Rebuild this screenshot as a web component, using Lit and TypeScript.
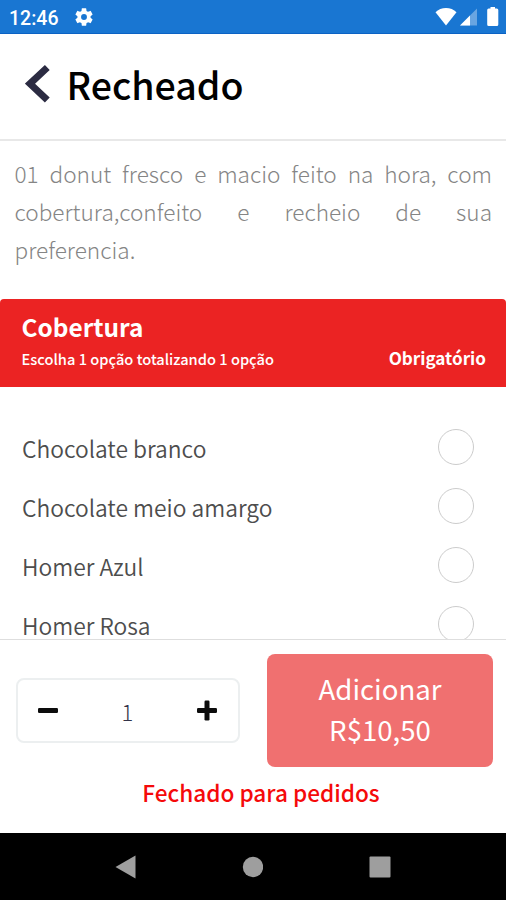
import { LitElement, html, css, svg } from "lit";
import { customElement, property, state } from "lit/decorators.js";

@customElement("status-bar")
class StatusBar extends LitElement {
  static styles = css`
    :host { display: flex; align-items: center; height: 34px; flex: none; box-sizing: border-box;
      background: #1976d2; border-bottom: 1px solid #0b62c4; color: #fff; padding: 1px 7px 0 9px;
      font: 500 19.5px/32px Roboto, "Liberation Sans", sans-serif; }
    .time { padding-top: 3px; }
    svg { display: block; fill: #fff; }
    .gear { margin-left: 15px; }
    .space { flex: 1; }
    .wifi { margin-right: 2px; }
    .signal { margin-right: 9px; }
  `;
  render() {
    return html`
      <span class="time">12:46</span>
      <svg class="gear" width="22" height="22" viewBox="0 0 24 24"><path d="M19.140 12.940c.04-.3.06-.61.06-.94 0-.32-.02-.64-.07-.94l2.030-1.580a.49.49 0 0 0 .12-.61l-1.920-3.320a.49.49 0 0 0-.59-.22l-2.390.96c-.5-.38-1.030-.7-1.620-.94l-.36-2.540a.48.48 0 0 0-.48-.41h-3.840c-.24 0-.43.17-.47.41l-.36 2.540c-.59.24-1.130.57-1.620.94l-2.390-.96c-.22-.08-.47 0-.59.22L2.740 8.870c-.12.21-.08.47.12.61l2.030 1.580c-.05.3-.09.63-.09.94s.02.64.07.94l-2.030 1.580a.49.49 0 0 0-.12.61l1.920 3.320c.12.22.37.29.59.22l2.390-.96c.5.38 1.030.7 1.620.94l.36 2.540c.05.24.24.41.48.41h3.840c.24 0 .44-.17.47-.41l.36-2.540c.59-.24 1.130-.56 1.620-.94l2.390.96c.22.08.47 0 .59-.22l1.920-3.320c.12-.22.07-.47-.12-.61zM12 15.200a3.200 3.200 0 1 1 0-6.400 3.200 3.200 0 0 1 0 6.400z"/></svg>
      <span class="space"></span>
      <svg class="wifi" width="23" height="20" viewBox="0 0 23 20"><path d="M.5 5.200C3.200 2.600 7 1 11 1s7.800 1.600 10.500 4.200L11 18.400z"/></svg>
      <svg class="signal" width="18" height="18" viewBox="0 0 18 18"><path d="M17 .5v17H0z" opacity=".35"/><path d="M10 7.500v10H0z"/></svg>
      <svg width="12" height="20" viewBox="0 0 12 20"><path d="M3.500 0h4.500v1.500h1.800q1.500 0 1.500 1.500v14.500q0 1.500-1.500 1.500H1.700Q.2 19 .2 17.500V3q0-1.500 1.500-1.500h1.800z"/></svg>
    `;
  }
}

@customElement("option-row")
class OptionRow extends LitElement {
  @property() label = "";
  static styles = css`
    :host { display: flex; align-items: center; justify-content: space-between; height: 59px; flex: none; padding: 0 32.500px 0 22px; }
    .label { color: #4d4d4d; font-size: 22.800px; line-height: 34px; font-weight: 350; padding-top: 4px; }
    .radio { width: 36px; height: 36px; box-sizing: border-box; border: 1.500px solid #cccccc; border-radius: 50%; }
  `;
  render() {
    return html`<span class="label">${this.label}</span><span class="radio"></span>`;
  }
}

@customElement("app-root")
class AppRoot extends LitElement {
  @state() private options = ["Chocolate branco", "Chocolate meio amargo", "Homer Azul", "Homer Rosa"];

  static styles = css`
    :host { display: flex; flex-direction: column; height: 900px; overflow: hidden; background: #fff;
      font-family: "Noto Sans CJK JP", "Noto Sans CJK SC", sans-serif; }
    svg { display: block; }
    .header { height: 107px; flex: none; box-sizing: border-box; border-bottom: 2px solid #e8e8e8;
      display: flex; align-items: center; padding: 0 25px 5px; gap: 15.500px; }
    .title { margin: 0; font-size: 37.500px; line-height: 50px; font-weight: 500; color: #000; }
    .description { margin: 0; flex: none; height: 158px; box-sizing: border-box; padding: 14px 14px 0 14.500px;
      font-size: 22.600px; line-height: 38px; font-weight: 300; color: #858585; text-align: justify; }
    .group { height: 88px; flex: none; box-sizing: border-box; background: #eb2323; color: #fff;
      border-radius: 4px 4px 0 0; padding: 8px 20px 0 21.500px; }
    .group-name { font-size: 24.400px; line-height: 39px; font-weight: 700; }
    .group-info { display: flex; justify-content: space-between; align-items: baseline; line-height: 24px; }
    .hint { font-size: 14.650px; font-weight: 500; }
    .required { font-size: 17.100px; font-weight: 700; }
    .options { flex: none; height: 252px; box-sizing: border-box; overflow: hidden; padding-top: 30px; display: flex; flex-direction: column; }
    .footer { flex: none; height: 194px; box-sizing: border-box; border-top: 1.500px solid #dedede; padding: 14px 13px 0 16px; }
    .actions { display: flex; justify-content: space-between; align-items: center; }
    .stepper { width: 224px; height: 65px; box-sizing: border-box; border: 2px solid #eceff0; border-radius: 8px;
      display: flex; align-items: center; justify-content: space-between; padding: 0 21px 0 20px; }
    .count { font-size: 22px; line-height: 32px; font-weight: 300; color: #333348; }
    .add { width: 226px; height: 113px; border-radius: 8px; background: #f07070; color: #fff; box-sizing: border-box; padding-bottom: 4px;
      display: flex; flex-direction: column; align-items: center; justify-content: center; font-size: 27.600px; line-height: 41px; font-weight: 400; }
    .closed { text-align: center; color: #f50a0a; font-size: 22.600px; line-height: 32px; font-weight: 500; padding: 10px 0 0 14px; margin-right: 1px; }
    .nav { flex: 1; background: #000; display: flex; align-items: center; justify-content: space-between; padding: 0 115px; }
    .nav svg { fill: #9e9e9e; }
  `;

  render() {
    const minus = svg`<rect x="0" y="8" width="20" height="5" rx="1.200"/>`;
    return html`
      <status-bar></status-bar>
      <div class="header">
        <svg width="26" height="40" viewBox="0 0 26 40"><path d="M22.300 3.500 5 19.700 22.300 36" fill="none" stroke="#2b2b42" stroke-width="7"/></svg>
        <h1 class="title">Recheado</h1>
      </div>
      <p class="description">01 donut fresco e macio feito na hora, com cobertura,confeito e recheio de sua preferencia.</p>
      <div class="group">
        <div class="group-name">Cobertura</div>
        <div class="group-info"><span class="hint">Escolha 1 opção totalizando 1 opção</span><span class="required">Obrigatório</span></div>
      </div>
      <div class="options">${this.options.map((o) => html`<option-row .label=${o}></option-row>`)}</div>
      <div class="footer">
        <div class="actions">
          <div class="stepper">
            <svg width="20" height="21" viewBox="0 0 20 21" fill="#0c0c0c">${minus}</svg>
            <span class="count">1</span>
            <svg width="20" height="21" viewBox="0 0 20 21" fill="#0c0c0c">${minus}<rect x="7.500" y="0.500" width="5" height="20" rx="1.200"/></svg>
          </div>
          <div class="add"><span>Adicionar</span><span>R$10,50</span></div>
        </div>
        <div class="closed">Fechado para pedidos</div>
      </div>
      <div class="nav">
        <svg width="21" height="24" viewBox="0 0 21 24"><path d="M20.500.5v23L.5 12z"/></svg>
        <svg width="21" height="22" viewBox="0 0 21 22"><circle cx="11" cy="11" r="10.200"/></svg>
        <svg width="22" height="22" viewBox="0 0 22 22"><rect x=".5" y=".5" width="21" height="21" rx="1"/></svg>
      </div>
    `;
  }
}
